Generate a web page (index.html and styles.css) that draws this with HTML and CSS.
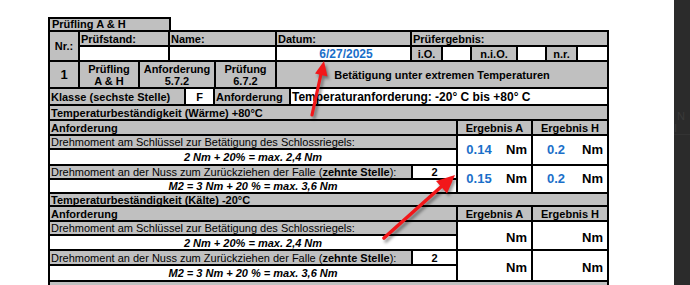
FILE: index.html
```html
<!DOCTYPE html>
<html lang="de">
<head>
<meta charset="utf-8">
<title>Prüfling A &amp; H</title>
<link rel="stylesheet" href="styles.css">
</head>
<body>
<div class="screen">
  <div class="page">
    <div class="title">Prüfling A &amp; H</div>
    <div class="sheet">
      <div class="head">
        <div class="c g nr">Nr.:</div>
        <div class="c g">Prüfstand:</div>
        <div class="c g">Name:</div>
        <div class="c g">Datum:</div>
        <div class="c g">Prüfergebnis:</div>
        <div class="c w"></div>
        <div class="c w"></div>
        <div class="c w date">6/27/2025</div>
        <div class="result">
          <div class="c g ctr">i.O.</div>
          <div class="c w"></div>
          <div class="c g ctr">n.i.O.</div>
          <div class="c w"></div>
          <div class="c g ctr">n.r.</div>
          <div class="c w"></div>
        </div>
      </div>
      <div class="row-one">
        <div class="c g ctr big">1</div>
        <div class="c g ctr">Prüfling<br>A &amp; H</div>
        <div class="c g ctr">Anforderung<br>5.7.2</div>
        <div class="c g ctr">Prüfung<br>6.7.2</div>
        <div class="c g ctr">Betätigung unter extremen Temperaturen</div>
      </div>
      <div class="klasse">
        <div class="c g">Klasse (sechste Stelle)</div>
        <div class="c w ctr">F</div>
        <div class="c g">Anforderung</div>
        <div class="c w temp">Temperaturanforderung: -20° C bis +80° C</div>
      </div>
      <div class="c g band">Temperaturbeständigkeit (Wärme) +80°C</div>
      <div class="block b1">
        <div class="c g">Anforderung</div>
        <div class="c g ctr">Ergebnis A</div>
        <div class="c g ctr">Ergebnis H</div>
        <div class="c g reg">Drehmoment am Schlüssel zur Betätigung des Schlossriegels:</div>
        <div class="c w val a span2"><span class="num">0.14</span><span class="unit">Nm</span></div>
        <div class="c w val h span2"><span class="num">0.2</span><span class="unit">Nm</span></div>
        <div class="c w formula">2 Nm + 20% = max. 2,4 Nm</div>
        <div class="split">
          <div class="c g reg">Drehmoment an der Nuss zum Zurückziehen der Falle (<b>zehnte Stelle</b>):</div>
          <div class="c w ctr">2</div>
        </div>
        <div class="c w val a span2"><span class="num">0.15</span><span class="unit">Nm</span></div>
        <div class="c w val h span2"><span class="num">0.2</span><span class="unit">Nm</span></div>
        <div class="c w formula">M2 = 3 Nm + 20 % = max. 3,6 Nm</div>
      </div>
      <div class="c g band cold">Temperaturbeständigkeit (Kälte) -20°C</div>
      <div class="block b2">
        <div class="c g">Anforderung</div>
        <div class="c g ctr">Ergebnis A</div>
        <div class="c g ctr">Ergebnis H</div>
        <div class="c g reg">Drehmoment am Schlüssel zur Betätigung des Schlossriegels:</div>
        <div class="c w val a span2 low"><span class="unit">Nm</span></div>
        <div class="c w val h span2 low"><span class="unit">Nm</span></div>
        <div class="c w formula">2 Nm + 20% = max. 2,4 Nm</div>
        <div class="split">
          <div class="c g reg">Drehmoment an der Nuss zum Zurückziehen der Falle (<b>zehnte Stelle</b>):</div>
          <div class="c w ctr">2</div>
        </div>
        <div class="c w val a span2 low"><span class="unit">Nm</span></div>
        <div class="c w val h span2 low"><span class="unit">Nm</span></div>
        <div class="c w formula">M2 = 3 Nm + 20 % = max. 3,6 Nm</div>
      </div>
      <div class="c g next"></div>
    </div>
    <svg class="arrows" width="674" height="285" viewBox="0 0 674 285">
      <g class="arrow">
        <line x1="312" y1="115" x2="321" y2="74" stroke="#f2171a" stroke-width="3.2" stroke-linecap="round"/>
        <polygon points="324,61 315,73.5 327.5,76.5" fill="#f2171a"/>
      </g>
      <g class="arrow">
        <line x1="384" y1="238" x2="442" y2="186" stroke="#f2171a" stroke-width="3.6" stroke-linecap="round"/>
        <polygon points="455,175 436,181 447,193.5" fill="#f2171a"/>
      </g>
    </svg>
  </div>
  <div class="side">
    <div class="side-top"><span class="ghost">N I</span></div>
  </div>
</div>
</body>
</html>
```

FILE: styles.css
```css
* { box-sizing: border-box; }
html, body { margin: 0; padding: 0; }
body {
  width: 690px;
  height: 285px;
  overflow: hidden;
  background: #fff;
  font-family: "Liberation Sans", Arial, sans-serif;
  font-size: 11px;
  font-weight: bold;
  color: #000;
}
.screen { display: flex; height: 285px; }
.page {
  flex: 1;
  position: relative;
  padding: 17px 0 0 48px;
  overflow: hidden;
}
.side { width: 16px; background: #2b2b2b; }
.side-top { height: 135px; border-bottom: 1px solid #333; padding-top: 110px; }
.ghost { color: #3a3a3a; font-weight: normal; font-size: 11px; padding-left: 3px; }

.title {
  width: 123px;
  height: 13px;
  border: 2px solid #000;
  border-bottom: 0;
  background: #c0c0c0;
  line-height: 11px;
  padding-left: 2px;
}
.sheet {
  width: 561px;
  background: #000;
  padding: 2px;
  display: flex;
  flex-direction: column;
  gap: 2px;
}
.c {
  display: flex;
  align-items: center;
  white-space: nowrap;
  overflow: hidden;
  padding: 0 1px;
  line-height: 12px;
}
.g { background: #c0c0c0; }
.w { background: #fff; }
.ctr { justify-content: center; text-align: center; }
.reg { font-weight: normal; }

.head {
  display: grid;
  grid-template-columns: 28px 88px 105px 133px 195px;
  grid-template-rows: 13px 13px;
  gap: 2px;
}
.nr { grid-row: span 2; justify-content: center; }
.result {
  display: grid;
  grid-template-columns: 29px 27px 44px 27px 29px 29px;
  gap: 2px;
}
.date { justify-content: center; color: #1a6fc9; font-size: 12px; padding-left: 6px; }

.row-one {
  display: grid;
  grid-template-columns: 28px 58px 74px 59px 330px;
  height: 25px;
  gap: 2px;
}
.big { font-size: 13px; }

.klasse {
  display: grid;
  grid-template-columns: 134px 27px 74px 316px;
  height: 15px;
  gap: 2px;
}
.temp { font-size: 12px; }

.band { height: 13px; }
.cold { height: 11px; }
.next { height: 20px; }

.block {
  display: grid;
  grid-template-columns: 406px 73px 74px;
  gap: 2px;
}
.b1 { grid-template-rows: 13px 12px 14px 12px 12px; }
.b2 { grid-template-rows: 13px 12px 13px 13px 14px; }
.span2 { grid-row: span 2; }
.formula { justify-content: center; font-style: italic; }
.split {
  display: grid;
  grid-template-columns: 361px 43px;
  gap: 2px;
}
.val { padding: 0 4px 0 0; font-size: 13px; }
.low { padding-top: 4px; }
.num { color: #1a6fc9; text-align: center; }
.a .num { width: 42px; }
.h .num { width: 46px; }
.unit { margin-left: auto; }

.arrows {
  position: absolute;
  left: 0;
  top: 0;
  pointer-events: none;
}
.arrow { filter: drop-shadow(2px 3px 1.5px rgba(0, 0, 0, 0.4)); }
```
